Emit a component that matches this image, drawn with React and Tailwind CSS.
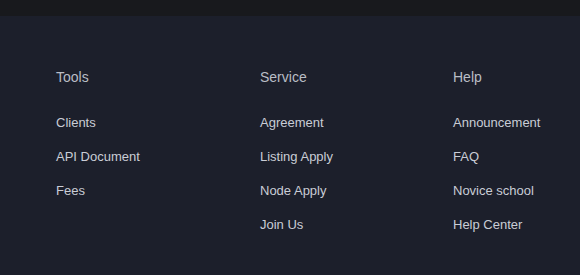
const columns = [
  { title: "Tools", links: ["Clients", "API Document", "Fees"], width: "w-[204px]" },
  { title: "Service", links: ["Agreement", "Listing Apply", "Node Apply", "Join Us"], width: "w-[193px]" },
  { title: "Help", links: ["Announcement", "FAQ", "Novice school", "Help Center"], width: "w-[120px]" },
];

export default function App() {
  return (
    <div className="w-[580px] h-[275px] bg-[#1c1f2b] font-['Liberation_Sans',Arial,sans-serif] overflow-hidden">
      <div className="h-4 bg-[#18191d]" />
      <footer className="flex pl-14 pt-[51px]">
        {columns.map((col) => (
          <div key={col.title} className={`${col.width} flex flex-col`}>
            <h3 className="text-[14px] leading-5 text-[#b9bdc6] font-normal">{col.title}</h3>
            <ul className="mt-[26px] flex flex-col gap-[14px]">
              {col.links.map((link) => (
                <li key={link} className="text-[13px] leading-5 text-[#c9cdd6]">
                  <a href="#">{link}</a>
                </li>
              ))}
            </ul>
          </div>
        ))}
      </footer>
    </div>
  );
}
